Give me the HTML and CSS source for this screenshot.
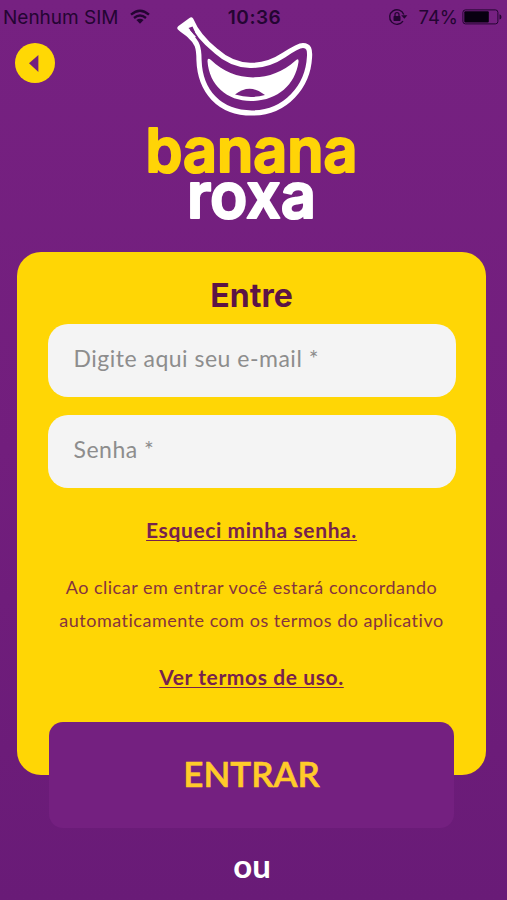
FILE: index.html
```html
<!DOCTYPE html>
<html lang="pt-BR">
    <head>
        <meta charset="utf-8">
        <title>Banana Roxa</title>
        <link rel="stylesheet" href="styles.css">
    </head>
    <body>
        <div class="status">
            <div class="status-left">
                <span class="carrier">Nenhum SIM</span>
                <svg class="wifi" width="20" height="16" viewBox="0 0 20 16">
                    <path d="M1 5.7Q10-2.2 19 5.7M4 9Q10 4 16 9" fill="none" stroke="#240532" stroke-width="2.3"/>
                    <path d="M6.4 11.1Q10 8.3 13.6 11.1L10 14.8Z" fill="#240532"/>
                </svg>
            </div>
            <span class="clock">10:36</span>
            <div class="status-right">
                <svg width="20" height="18" viewBox="0 0 20 18">
                    <path d="M15.8 6.4A7.3 7.3 0 1 0 15 13.2" fill="none" stroke="#240532" stroke-width="1.4"/>
                    <path d="M13.2 7.2h6.2l-3 3.5z" fill="#240532"/>
                    <rect x="5.5" y="8" width="7" height="5" rx=".7" fill="#240532"/>
                    <path d="M7 8.2V6.6a2 2 0 0 1 4 0v1.6" fill="none" stroke="#240532" stroke-width="1.3"/>
                </svg>
                <span class="percent">74%</span>
                <svg width="40" height="16" viewBox="0 0 40 16">
                    <rect x=".9" y=".9" width="35" height="14" rx="2.5" fill="none" stroke="#240532" stroke-width="1"/>
                    <rect x="2.3" y="2.3" width="24.5" height="11.2" rx="1" fill="#080010"/>
                    <path d="M37.5 5.2q2 .5 2 2.7t-2 2.7z" fill="#240532"/>
                </svg>
            </div>
        </div>

        <div class="header">
            <a class="back" href="#">
                <svg width="40" height="40" viewBox="0 0 40 40">
                    <path d="M14 20.3L23.4 12v17z" fill="#74207f"/>
                </svg>
            </a>
            <svg class="logo" width="210" height="208" viewBox="147 15 210 208">
                <path d="M180 28L191 20C196 32 206 43 216 51C237 70 263 69 284 55C293 49 299 45.500 303 45.500C309 45.500 310 50 309.500 57C308 86 286 113 252 113C219 113 200 91 199 60C199 47 197 42 190 36C186 32 183 31 180 28Z" fill="none" stroke="#fff" stroke-width="5.200" stroke-linejoin="round"/>
                <path d="M178 28L192 18L195 25L190 30L196 37L193 38Z" fill="#fff"/>
                <path d="M188.500 28L192.500 26.500L195 32L194 34.500Z" fill="#74207f"/>
                <path d="M207.500 61Q207.500 57 211 60C234 83 271 83 295 61Q299 57 298.500 62C295 86 276 101 251 101C227 101 209 85 207.500 61Z" fill="#fff"/>
                <path d="M235 94.500Q250 83 265 95Q250 99 235 94.500Z" fill="#74207f"/>
                <text class="logo-banana" x="145.500" y="172" textLength="212" lengthAdjust="spacingAndGlyphs">banana</text>
                <text class="logo-roxa" x="187" y="218" textLength="129" lengthAdjust="spacingAndGlyphs">roxa</text>
            </svg>
        </div>

        <form class="card">
            <h1>Entre</h1>
            <input class="email" type="text" placeholder="Digite aqui seu e-mail *">
            <input class="senha" type="password" placeholder="Senha *">
            <a class="link forgot" href="#">Esqueci minha senha.</a>
            <p class="terms">
                Ao clicar em entrar você estará concordando<br>
                automaticamente com os termos do aplicativo
            </p>
            <a class="link uso" href="#">Ver termos de uso.</a>
            <button type="button" class="entrar">ENTRAR</button>
        </form>

        <div class="ou">ou</div>
    </body>
</html>
```

FILE: styles.css
```css
* {
    box-sizing: border-box;
}

body {
    margin: 0;
    height: 900px;
    overflow: hidden;
    background: linear-gradient(#762181, #721e7d 50%, #691b77);
    font-family: Lato, sans-serif;
    font-variant-ligatures: none;
    color: #74207f;
}

/* status bar */
.status {
    display: grid;
    grid-template-columns: 1fr auto 1fr;
    align-items: center;
    height: 34px;
    padding: 0 5px 0 3px;
    font-family: Inter, sans-serif;
    font-size: 19px;
    color: #240532;
}

.status-left, .status-right {
    display: flex;
    align-items: center;
}

.status-left {
    gap: 11px;
}

.status-right {
    justify-content: flex-end;
    gap: 4px;
}

.clock {
    padding-left: 4px;
    font-weight: 600;
    letter-spacing: 0.5px;
}

.percent {
    margin-left: 6px;
    font-size: 18.5px;
}

/* logo */
.header {
    display: grid;
    grid-template-columns: 132px 210px 1fr;
    height: 218px;
}

.back {
    width: 40px;
    height: 40px;
    margin: 9px 0 0 15px;
    border-radius: 50%;
    background: #ffd805;
}

/* the tip of the banana goes up into the status bar */
.logo {
    margin: -19px 0 0 15px;
    overflow: visible;
}

.logo text {
    font-family: Inter, sans-serif;
    font-weight: 600;
    stroke-width: 2.2;
    stroke-linejoin: round;
}

.logo-banana {
    font-size: 61px;
    fill: #ffd407;
    stroke: #ffd407;
}

.logo-roxa {
    font-size: 64px;
    fill: #fff;
    stroke: #fff;
}

/* login card */
.card {
    display: flex;
    flex-direction: column;
    align-items: center;
    width: 469px;
    height: 523px;
    margin-left: 17px;
    padding: 25px 31px 0;
    border-radius: 24px;
    background: #ffd605;
}

h1 {
    margin: 0 0 9px;
    font-family: Inter, sans-serif;
    font-size: 32px;
    line-height: 38px;
    color: #5c1446;
}

input {
    width: 408px;
    height: 73px;
    flex: none;
    margin-bottom: 18px;
    padding: 0 26px 6px;
    border: 0;
    border-radius: 20px;
    background: #f4f4f4;
    font-family: Lato, sans-serif;
    font-size: 23px;
    letter-spacing: 0.5px;
}

input::placeholder {
    color: #8d8d8d;
}

.link {
    font-size: 21px;
    font-weight: 700;
    line-height: 26px;
    letter-spacing: 0.6px;
    color: #76224e;
    text-underline-offset: 2px;
    text-decoration-thickness: 1px;
    text-decoration-skip-ink: none;
}

.forgot {
    margin-top: 11px;
}

.terms {
    margin: 28px -20px 28px;
    font-size: 18px;
    line-height: 32.5px;
    letter-spacing: 0.5px;
    text-align: center;
    white-space: nowrap;
    color: #85333f;
}

.entrar {
    flex: none;
    width: 405px;
    height: 106px;
    margin-top: 32px;
    padding-bottom: 5px;
    border: 0;
    border-radius: 14px;
    background: #742080;
    font-family: Lato, sans-serif;
    font-size: 35px;
    font-weight: 600;
    color: #ffcb2a;
    -webkit-text-stroke: 0.6px #ffcb2a;
}

.ou {
    margin-top: 70px;
    padding-right: 3px;
    font-size: 33px;
    font-weight: 700;
    line-height: 40px;
    text-align: center;
    color: #fff;
}
```
